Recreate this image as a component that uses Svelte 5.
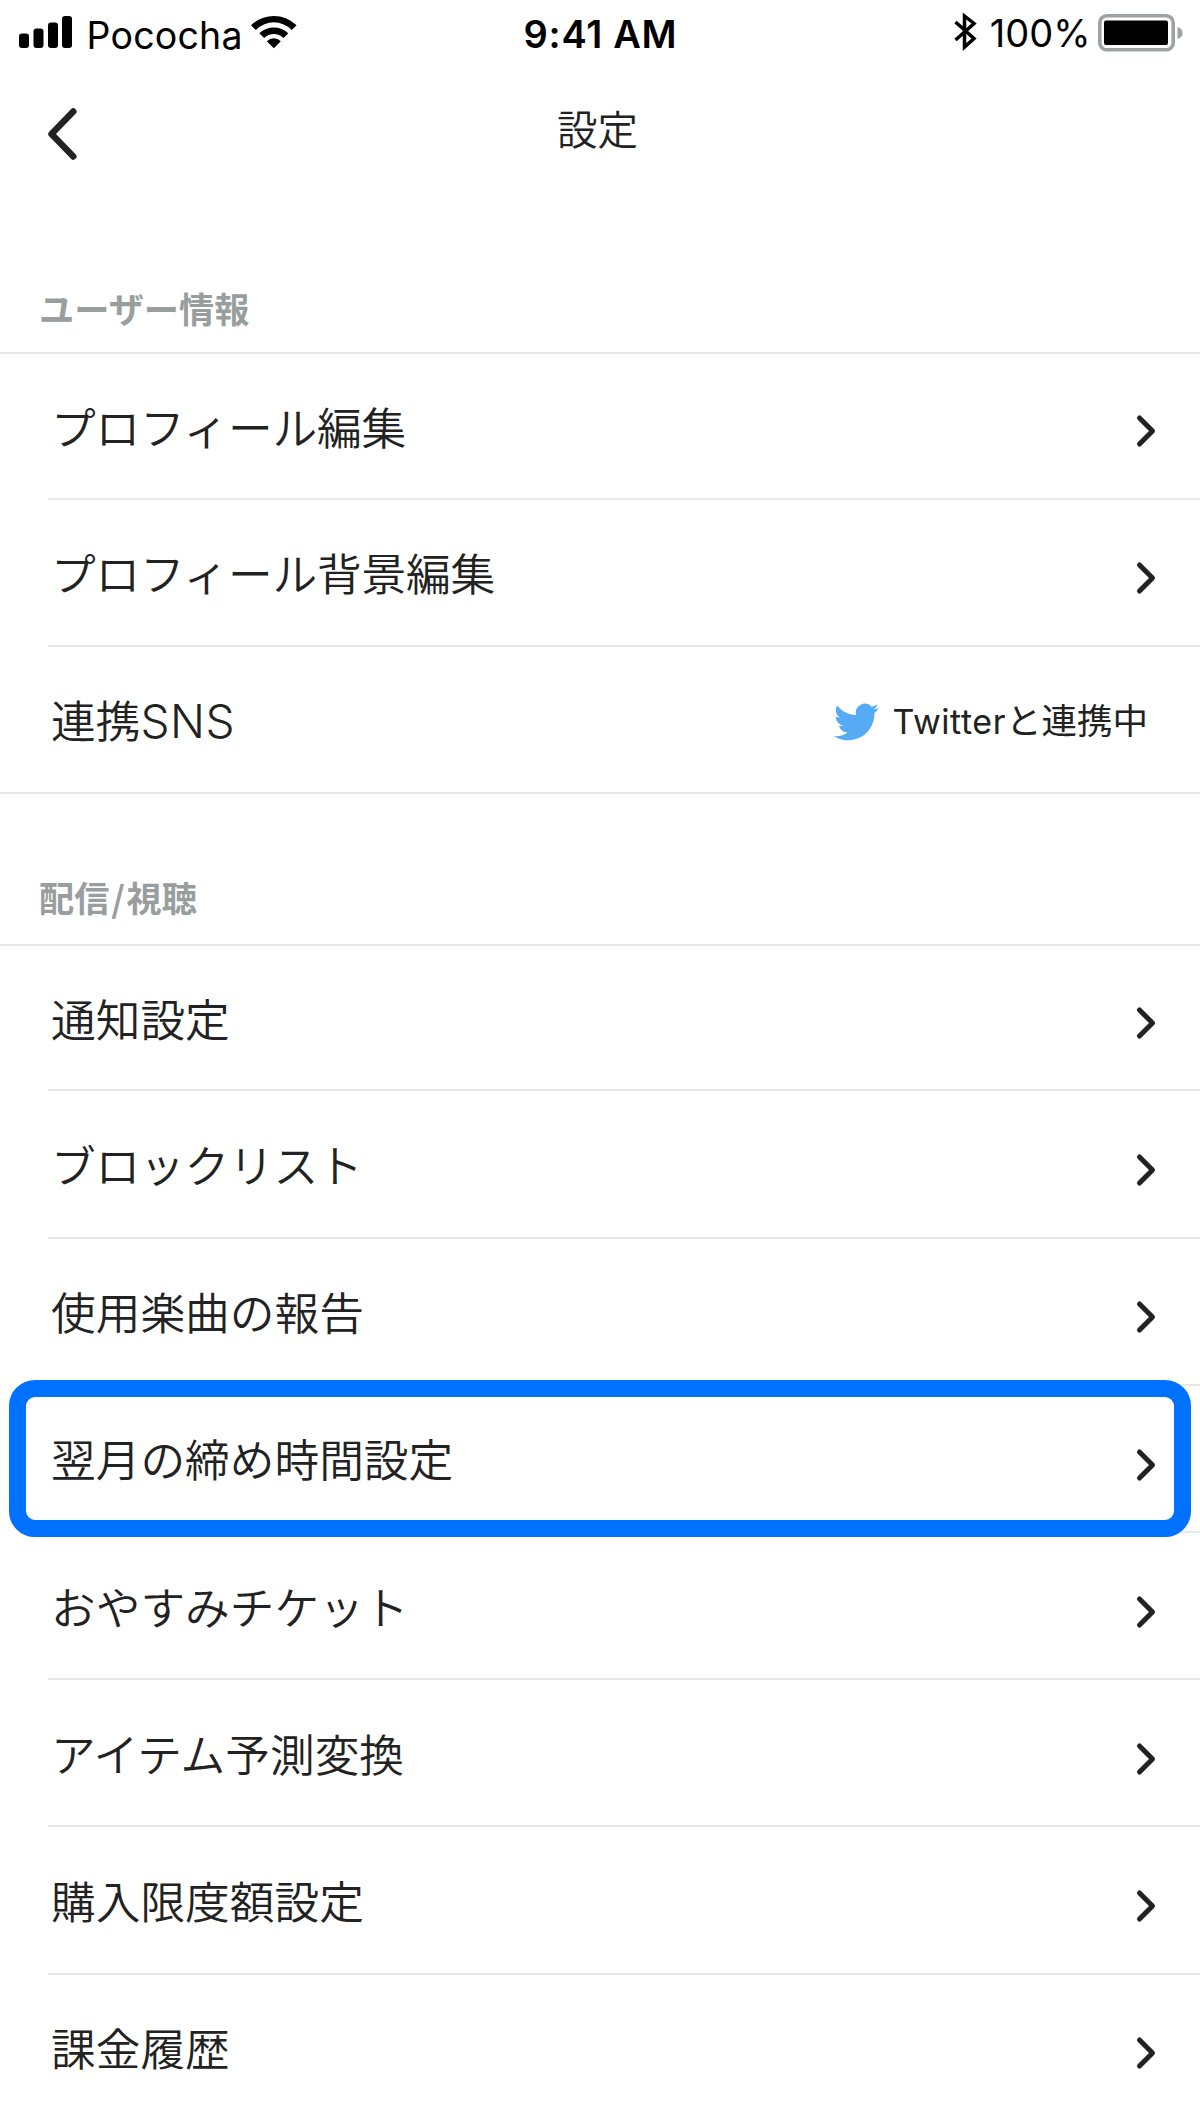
<script>
  const sections = [
    {
      title: ['ユーザー情報'],
      rows: [
        { label: 'プロフィール編集', kana: true },
        { label: 'プロフィール背景編集', kana: true },
        { label: '連携', latin: 'SNS', linked: true }
      ]
    },
    {
      title: ['配信', '視聴'],
      rows: [
        { label: '通知設定' },
        { label: 'ブロックリスト', kana: true },
        { label: '使用楽曲の報告' },
        { label: '翌月の締め時間設定', highlighted: true },
        { label: 'おやすみチケット' },
        { label: 'アイテム予測変換' },
        { label: '購入限度額設定' },
        { label: '課金履歴' }
      ]
    }
  ];
</script>

<main class="screen">
  <div class="status">
    <div class="carrier">
      <svg class="signal" width="54" height="33" viewBox="0 0 54 33">
        <rect x="0" y="17.5" width="10" height="14.5" rx="3" />
        <rect x="14.5" y="12.5" width="10" height="19.5" rx="3" />
        <rect x="29" y="6.5" width="10" height="25.5" rx="3" />
        <rect x="43" y="0" width="10" height="32" rx="3" />
      </svg>
      <span class="network">Pococha</span>
      <svg class="wifi" width="46" height="33" viewBox="0 0 46 33">
        <path d="M0 9.3Q10 0 22.8 0T45.6 9.3L40.8 14Q32.5 6.3 22.8 6.3T4.8 14Z" />
        <path d="M8.3 17.3Q14.5 11.5 22.8 11.5T37.3 17.3L32.5 22Q28.2 18 22.8 18T13.1 22Z" />
        <path d="M15.8 25.2Q19 22.2 22.8 22.2T29.8 25.2L22.8 32.3Z" />
      </svg>
    </div>
    <span class="clock">9:41 AM</span>
    <div class="power">
      <svg class="bluetooth" width="24" height="40" viewBox="0 0 24 40">
        <path d="M1.5 10L20 26.5L10.5 35V4L20 11.5L1.5 28" />
      </svg>
      <span class="percent">100%</span>
      <svg class="battery" width="86" height="38" viewBox="0 0 86 38">
        <rect class="shell" x="1.8" y="1.8" width="73.4" height="34" rx="7" />
        <rect x="6" y="6.5" width="64" height="24.5" rx="2" />
        <path class="tip" d="M79.5 13Q84.5 14.5 84.5 19T79.5 25Z" />
      </svg>
    </div>
  </div>

  <header class="nav">
    <svg class="back" width="32" height="54" viewBox="0 0 32 54">
      <path d="M26.3 4.5L4.5 27L26.3 49.5" />
    </svg>
    <h1>設定</h1>
  </header>

  {#each sections as section}
    <section>
      <h2>{#each section.title as part, i}{#if i > 0}<span class="slash">/</span>{/if}{part}{/each}</h2>
      <ul>
        {#each section.rows as row}
          <li class:highlighted={row.highlighted}>
            <span class="label" class:kana={row.kana}>{row.label}{#if row.latin}<span class="latin">{row.latin}</span>{/if}</span>
            {#if row.linked}
              <span class="linked">
                <svg class="bird" width="45" height="38" viewBox="0 2 24 20">
                  <path d="M23.953 4.57a10 10 0 01-2.825.775 4.958 4.958 0 002.163-2.723c-.951.555-2.005.959-3.127 1.184a4.92 4.92 0 00-8.384 4.482C7.69 8.095 4.067 6.13 1.64 3.162a4.822 4.822 0 00-.666 2.475c0 1.71.87 3.213 2.188 4.096a4.904 4.904 0 01-2.228-.616v.06a4.923 4.923 0 003.946 4.827 4.996 4.996 0 01-2.212.085 4.936 4.936 0 004.604 3.417 9.867 9.867 0 01-6.102 2.105c-.39 0-.779-.023-1.17-.067a13.995 13.995 0 007.557 2.209c9.053 0 13.998-7.496 13.998-13.985 0-.21 0-.42-.015-.63A9.935 9.935 0 0024 4.59z" />
                </svg>
                <span class="service">Twitter</span><span>と連携中</span>
              </span>
            {:else}
              <svg class="chevron" width="22" height="34" viewBox="0 0 22 34">
                <path d="M4.5 4L17.5 17L4.5 30" />
              </svg>
            {/if}
          </li>
        {/each}
      </ul>
    </section>
  {/each}
</main>

<style>
  :global(body) {
    margin: 0;
    background: #fff;
  }

  .screen {
    width: 1200px;
    height: 2117px;
    overflow: hidden;
    background: #fff;
    color: #222;
    font-family: Inter, 'Noto Sans CJK JP', sans-serif;
  }

  svg {
    display: block;
    flex: none;
  }

  .status {
    display: grid;
    grid-template-columns: 1fr auto 1fr;
    height: 68px;
    box-sizing: border-box;
    padding: 0 16px 0 19px;
    color: #000;
    white-space: nowrap;
  }

  .carrier,
  .power {
    display: flex;
    align-items: flex-start;
  }

  .power {
    justify-content: flex-end;
  }

  .signal {
    margin-top: 16px;
  }

  .network {
    margin: 11px 0 0 13.5px;
    width: 155px;
    font-size: 37.5px;
    line-height: 50px;
    letter-spacing: 0.2px;
  }

  .wifi {
    margin: 16px 0 0 9.5px;
  }

  .clock {
    margin: 9px 2px 0 0;
    font-size: 38px;
    font-weight: 600;
    line-height: 50px;
    letter-spacing: 0.7px;
  }

  .bluetooth {
    margin-top: 12px;
    fill: none;
    stroke: #000;
    stroke-width: 3.5;
  }

  .percent {
    margin: 8px 7.5px 0 11.5px;
    font-size: 38px;
    line-height: 50px;
  }

  .battery {
    margin-top: 14px;
  }

  .shell {
    fill: none;
    stroke: #9da3a2;
    stroke-width: 3.6;
  }

  .tip {
    fill: #9da3a2;
  }

  .nav {
    display: grid;
    grid-template-columns: 1fr auto 1fr;
    height: 212px;
  }

  .back {
    margin: 39px 0 0 47px;
    fill: none;
    stroke: #222;
    stroke-width: 6.5;
    stroke-linecap: round;
    stroke-linejoin: round;
  }

  h1 {
    margin: 33px 5px 0 0;
    font-size: 40.5px;
    font-weight: 350;
    line-height: 60px;
  }

  h2 {
    box-sizing: border-box;
    height: 72px;
    margin: 0;
    padding: 2px 0 0 39px;
    color: #989e9d;
    font-size: 35.2px;
    font-weight: 700;
    line-height: 52px;
    font-family: 'Noto Sans CJK JP', sans-serif;
  }

  .slash {
    margin: 0 1.8px;
  }

  ul {
    margin: 0;
    padding: 0;
    list-style: none;
    border-top: 2px solid #e8e8e8;
  }

  li {
    position: relative;
    display: flex;
    align-items: center;
    justify-content: space-between;
    box-sizing: border-box;
    height: 147.2px;
    margin-left: 48px;
    padding: 0 43px 0 3px;
    border-bottom: 2px solid #e8e8e8;
  }

  li:first-child {
    height: 145.5px;
  }

  section:first-of-type li:last-child {
    margin-left: 0;
    padding-left: 51px;
  }

  section + section {
    padding-top: 75px;
  }

  section + section h2 {
    height: 75px;
  }

  .label {
    padding-top: 6px;
    font-size: 44.7px;
    font-weight: 350;
    line-height: 60px;
    white-space: nowrap;
  }

  .kana {
    letter-spacing: -0.2px;
  }

  .latin {
    font-size: 46px;
    font-weight: 350;
    line-height: 1;
    letter-spacing: 0.5px;
  }

  .chevron {
    margin-top: 12.5px;
    fill: none;
    stroke: #222;
    stroke-width: 5;
    stroke-linecap: round;
    stroke-linejoin: round;
  }

  li:first-child .chevron {
    margin-top: 11px;
  }

  .linked {
    display: flex;
    align-items: center;
    padding: 6px 9px 0 0;
    font-size: 35.5px;
    line-height: 50px;
  }

  .bird {
    margin-right: 14px;
    fill: #55acf5;
  }

  .service {
    font-size: 34px;
    letter-spacing: 0.55px;
  }

  /* Callout frame that overlaps the row's dividers */
  .highlighted::after {
    content: '';
    position: absolute;
    inset: -6px 9px -6px -39px;
    border: 17px solid #0072ff;
    border-radius: 26px;
  }
</style>
